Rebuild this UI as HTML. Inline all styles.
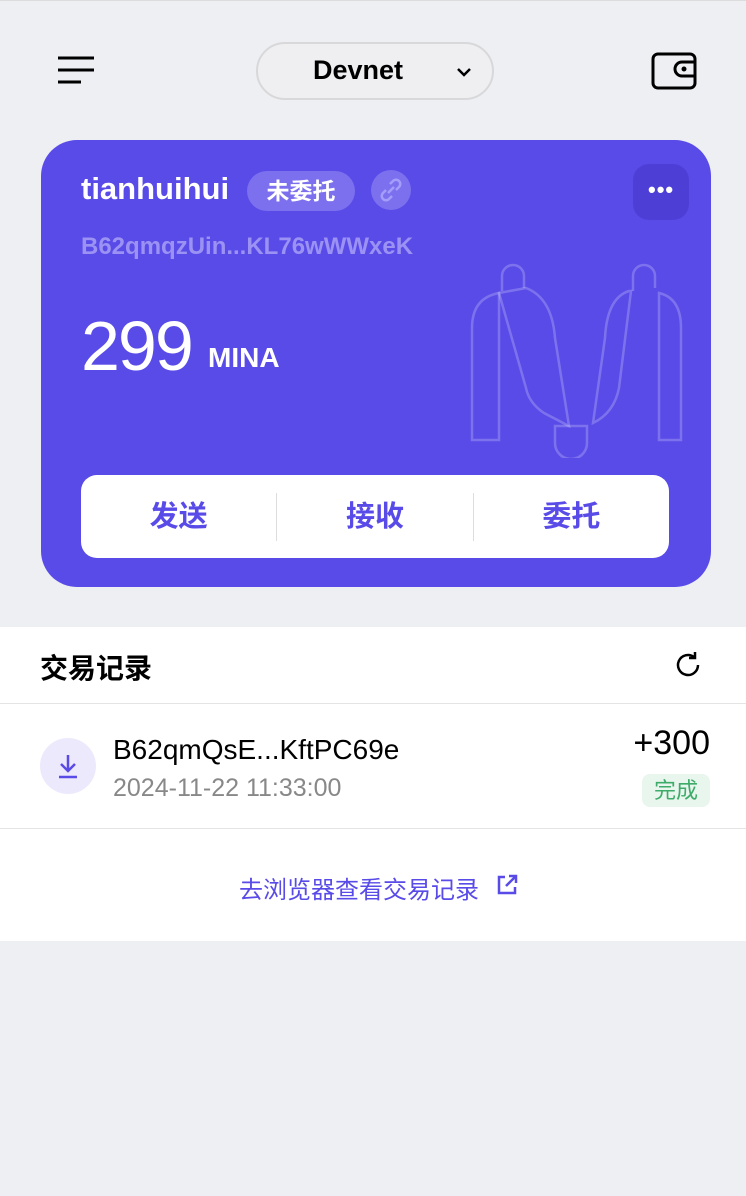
<!DOCTYPE html>
<html><head><meta charset="utf-8"><style>
*{margin:0;padding:0;box-sizing:border-box}
body{width:746px;height:1196px;background:#eeeff3;font-family:"Liberation Sans","Noto Sans CJK SC",sans-serif;position:relative;overflow:hidden;border-top:1px solid #dcdcdc}
.abs{position:absolute}
</style></head><body>
<svg class="abs" style="left:56px;top:54px" width="40" height="32"><g stroke="#000" stroke-width="3"><line x1="2" y1="3" x2="38" y2="3"/><line x1="2" y1="15" x2="38" y2="15"/><line x1="2" y1="27" x2="25" y2="27"/></g></svg>
<div class="abs" style="left:256px;top:41px;width:238px;height:58px;border:2px solid #d8d8da;border-radius:29px;background:#efeff2"></div>
<div class="abs" style="left:313px;top:54px;font-size:27px;font-weight:bold;color:#000">Devnet</div>
<svg class="abs" style="left:455px;top:65px" width="18" height="12"><path d="M3 3 L9 9 L15 3" stroke="#000" stroke-width="2.5" fill="none"/></svg>
<svg class="abs" style="left:650px;top:51px" width="48" height="38"><rect x="3" y="2" width="42" height="34" rx="5" stroke="#000" stroke-width="3" fill="none"/><path d="M45 10 H32 a7 7 0 0 0 0 14 H45" stroke="#000" stroke-width="3" fill="none"/><circle cx="34" cy="17" r="2.5" fill="#000"/></svg>

<div class="abs" style="left:41px;top:139px;width:670px;height:447px;background:#594be8;border-radius:36px;overflow:hidden">
<svg class="abs" style="left:428px;top:118px" width="220" height="200" fill="none" stroke="rgba(255,255,255,0.22)" stroke-width="2.5"><path d="M33 33 V18 a11 11 0 0 1 22 0 V30"/><path d="M30 35 Q3 40 3 70 V182 H30 Z"/><path d="M30 35 L57 30 Q83 40 86 80 L100 168 L75 155 Q60 145 57 130 Z" /><path d="M86 168 H118 V185 a16 16 0 0 1 -32 0 Z"/><path d="M164 33 V18 a11 11 0 0 1 22 0 V30"/><path d="M160 33 Q138 40 136 80 L124 165 Q145 155 150 130 L162 33 Z"/><path d="M190 35 Q212 40 212 70 V182 H190 Z"/></svg>
<div class="abs" style="left:40px;top:31px;font-size:31px;font-weight:bold;color:#fff">tianhuihui</div>
<div class="abs" style="left:206px;top:31px;width:108px;height:40px;border-radius:20px;background:#7c70ee;color:#fff;font-size:23px;font-weight:bold;text-align:center;line-height:40px">未委托</div>
<div class="abs" style="left:330px;top:30px;width:40px;height:40px;border-radius:20px;background:#7c70ee"></div>
<svg class="abs" style="left:338px;top:38px" width="24" height="24" fill="none" stroke="#a59dfa" stroke-width="2.5"><path d="M11 6 l3-3 a4 4 0 0 1 6 6 l-3 3 M13 18 l-3 3 a4 4 0 0 1 -6 -6 l3 -3 M9 15 l6 -6"/></svg>
<div class="abs" style="left:592px;top:24px;width:56px;height:56px;border-radius:16px;background:#4d3fd6"></div>
<div class="abs" style="left:607px;top:37px;color:#fff;font-size:22px;font-weight:bold;letter-spacing:1px">•••</div>
<div class="abs" style="left:40px;top:93px;font-size:24px;font-weight:bold;color:#9b92f3">B62qmqzUin...KL76wWWxeK</div>
<div class="abs" style="left:40px;top:166px;font-size:70px;color:#fff;letter-spacing:-2px">299</div>
<div class="abs" style="left:167px;top:202px;font-size:28px;font-weight:bold;color:#fff">MINA</div>
<div class="abs" style="left:40px;top:335px;width:588px;height:83px;background:#fff;border-radius:16px;display:flex;align-items:center;color:#594be8;font-size:29px;font-weight:bold">
<div style="flex:1;text-align:center;border-right:1px solid #ddd;line-height:48px">发送</div><div style="flex:1;text-align:center;border-right:1px solid #ddd;line-height:48px">接收</div><div style="flex:1;text-align:center;line-height:48px">委托</div></div>
</div>

<div class="abs" style="left:0;top:626px;width:746px;height:314px;background:#fff"></div>
<div class="abs" style="left:40px;top:646px;font-size:28px;font-weight:bold;color:#000">交易记录</div>
<svg class="abs" style="left:672px;top:648px" width="32" height="32" fill="none" stroke="#000" stroke-width="2.5"><path d="M26 16 a10 10 0 1 1 -4 -8"/><path d="M23 3 V9 H17"/></svg>
<div class="abs" style="left:0;top:702px;width:746px;height:1px;background:#e4e4e4"></div>
<div class="abs" style="left:40px;top:737px;width:56px;height:56px;border-radius:28px;background:#ece9fd"></div>
<svg class="abs" style="left:56px;top:752px" width="24" height="26" fill="none" stroke="#594be8" stroke-width="2.5"><path d="M12 2 V17 M5 11 L12 18 L19 11 M3 24 H21"/></svg>
<div class="abs" style="left:113px;top:733px;font-size:28px;color:#000">B62qmQsE...KftPC69e</div>
<div class="abs" style="left:113px;top:773px;font-size:25px;color:#888">2024-11-22 11:33:00</div>
<div class="abs" style="right:36px;top:723px;font-size:34px;color:#000">+300</div>
<div class="abs" style="left:642px;top:773px;width:68px;height:33px;border-radius:8px;background:#e8f6ee;color:#3fab69;font-size:22px;text-align:center;line-height:33px">完成</div>
<div class="abs" style="left:0;top:827px;width:746px;height:1px;background:#e4e4e4"></div>
<div class="abs" style="left:239px;top:869px;font-size:24px;color:#594be8">去浏览器查看交易记录</div>
<svg class="abs" style="left:495px;top:872px" width="24" height="24" fill="none" stroke="#594be8" stroke-width="2.5"><path d="M10 4 H4 V20 H20 V14 M14 3 H21 V10 M21 3 L11 13"/></svg>
</body></html>
